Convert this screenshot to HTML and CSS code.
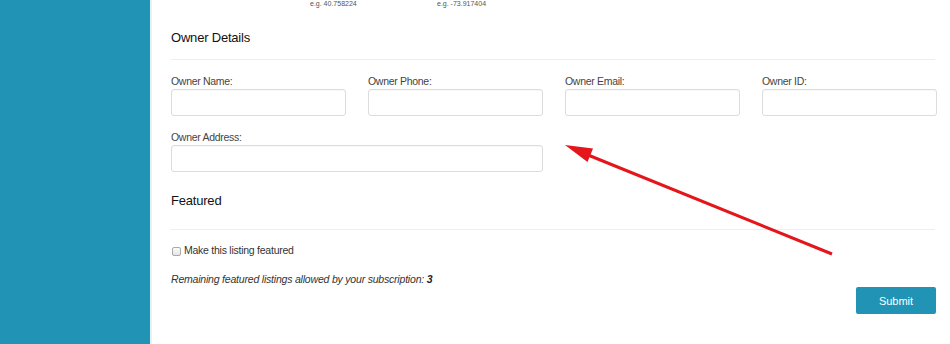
FILE: index.html
```html
<!DOCTYPE html>
<html lang="en">
  <head>
    <meta charset="UTF-8" />
    <title>Edit Listing</title>
    <link rel="stylesheet" href="styles.css">
  </head>
  <body>
    <div class="sidebar"></div>

    <div class="main">
      <div class="hints">
        <span class="hint">e.g. 40.758224</span>
        <span class="hint">e.g. -73.917404</span>
      </div>

      <h3 class="section-title owner-title">Owner Details</h3>
      <hr class="divider" />

      <div class="form-grid">
        <div class="field">
          <label>Owner Name:</label>
          <input type="text" />
        </div>
        <div class="field">
          <label>Owner Phone:</label>
          <input type="text" />
        </div>
        <div class="field">
          <label>Owner Email:</label>
          <input type="text" />
        </div>
        <div class="field">
          <label>Owner ID:</label>
          <input type="text" />
        </div>
        <div class="field field-wide">
          <label>Owner Address:</label>
          <input type="text" />
        </div>
      </div>

      <h3 class="section-title featured-title">Featured</h3>
      <hr class="divider divider-featured" />

      <label class="check-row">
        <input type="checkbox" class="check" />
        Make this listing featured
      </label>

      <p class="remaining">
        Remaining featured listings allowed by your subscription: <b>3</b>
      </p>

      <div class="actions">
        <button class="btn">Submit</button>
      </div>
    </div>

    <!-- annotation arrow -->
    <svg class="arrow" width="950" height="344" viewBox="0 0 950 344">
      <line x1="832" y1="254" x2="588" y2="155" stroke="#e4161b" stroke-width="3" />
      <polygon points="565,145 593,148.5 587.5,162" fill="#e4161b" />
    </svg>
  </body>
</html>
```

FILE: styles.css
```css
* {
  margin: 0;
  padding: 0;
  box-sizing: border-box;
}

body {
  position: relative;
  display: flex;
  width: 950px;
  height: 344px;
  overflow: hidden;
  font-family: "Liberation Sans", Arial, sans-serif;
  background: #fff;
  color: #333;
}

.sidebar {
  width: 150px;
  flex-shrink: 0;
  background: #2194b5;
}

.main {
  flex: 1;
  border-left: 2px solid #e2f4f9;
  padding: 0 13px 0 19px;
}

.hints {
  display: flex;
  padding-left: 139px;
  height: 7px;
  line-height: 7px;
  font-size: 7px;
  color: #555;
}

.hint {
  width: 127px;
}

.section-title {
  font-size: 13px;
  font-weight: normal;
  line-height: 16px;
  letter-spacing: -0.2px;
  color: #111;
}

.owner-title {
  margin-top: 23px;
}

.featured-title {
  margin-top: 21px;
}

.divider {
  border: 0;
  border-top: 1px solid #eeeeee;
  margin: 13px 2px 0 0;
}

.divider-featured {
  margin-top: 20px;
}

.form-grid {
  display: grid;
  grid-template-columns: repeat(4, 175px);
  column-gap: 22px;
  row-gap: 15px;
  margin-top: 15px;
}

.field-wide {
  grid-column: span 2;
}

.field label {
  display: block;
  font-size: 10.5px;
  line-height: 13px;
  letter-spacing: -0.3px;
  color: #444;
  margin-bottom: 1px;
}

.field input {
  display: block;
  width: 100%;
  height: 27px;
  border: 1px solid #dcdcdc;
  border-radius: 3px;
  background: #fff;
  box-shadow: inset 0 1px 1px rgba(0, 0, 0, 0.03);
}

.check-row {
  display: flex;
  align-items: center;
  margin-top: 14px;
  font-size: 10.5px;
  line-height: 13px;
  letter-spacing: -0.25px;
  color: #333;
}

.check {
  appearance: none;
  width: 9px;
  height: 9px;
  margin: 1px 3px 0 1px;
  border: 1px solid #a9a9a9;
  border-radius: 2px;
  background: linear-gradient(#fafafa, #e6e6e6);
}

.remaining {
  margin-top: 16px;
  font-size: 10.5px;
  line-height: 13px;
  font-style: italic;
  letter-spacing: -0.2px;
  color: #333;
}

.remaining b {
  color: #222;
}

.actions {
  display: flex;
  justify-content: flex-end;
  margin-top: 1px;
  padding-right: 1px;
}

.btn {
  width: 80px;
  height: 27px;
  border: 0;
  border-radius: 2px;
  background: #2194b5;
  color: #fff;
  font-family: "Liberation Sans", Arial, sans-serif;
  font-size: 11px;
}

.arrow {
  position: absolute;
  top: 0;
  left: 0;
  pointer-events: none;
}
```
